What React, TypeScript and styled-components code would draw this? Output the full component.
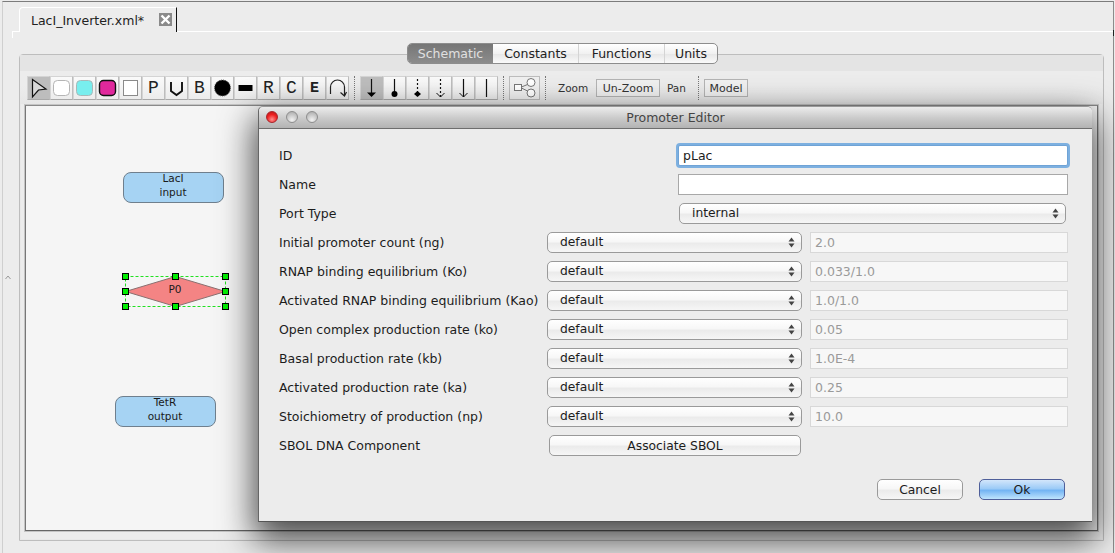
import * as React from 'react';
import styled, { createGlobalStyle, css } from 'styled-components';

const GlobalStyle = createGlobalStyle`
	html, body {
		margin: 0;
		padding: 0;
		background: #ececec;
	}
	* {
		box-sizing: border-box;
	}
`;

const font = `"DejaVu Sans", "Open Sans", sans-serif`;

const Page = styled.div`
	position: relative;
	width: 1115px;
	height: 553px;
	overflow: hidden;
	padding-top: 1px;
	background: #ececec;
	font-family: ${font};
	font-size: 12.5px;
	color: #1c1c1c;
`;

const Shell = styled.div`
	height: 552px;
	margin: 0 1px 0 2px;
	border-top: 1px solid #7c7c7c;
	border-left: 1px solid #cfcfcf;
	border-right: 1px solid #8c8c8c;
`;

const TabBar = styled.div`
	position: relative;
	display: flex;
	align-items: flex-end;
	height: 30px;
	margin-left: 9px;
	padding-left: 7px;
	border-bottom: 1px solid #fff;
	&::before {
		content: '';
		position: absolute;
		left: 0;
		top: 29px;
		width: 1px;
		height: 7px;
		background: #fff;
	}
	&::after {
		content: '';
		position: absolute;
		right: -1px;
		top: 28px;
		width: 1px;
		height: 6px;
		background: #222;
	}
`;

const Tab = styled.div`
	display: flex;
	align-items: center;
	width: 158px;
	height: 25px;
	padding: 0 0 0 11px;
	border-top: 1px solid #fff;
	border-left: 1px solid #fff;
	border-right: 1px solid #111;
	border-top-left-radius: 4px;
	background: #ececec;
	margin-bottom: -1px;
	position: relative;
`;

const TabTitle = styled.span`
	flex: 1;
	font-size: 12.5px;
	color: #222;
`;

const TabClose = styled.svg`
	width: 13px;
	height: 13px;
	margin: -1px 4px 0 0;
`;

const Body = styled.div`
	padding: 22px 9px 0 16px;
`;

const Frame = styled.div`
	position: relative;
	height: 487px;
	border: 1px solid #bdbdbd;
	border-radius: 4px 4px 0 0;
	padding-bottom: 8px;
	display: flex;
	flex-direction: column;
	box-shadow: inset 0 0 0 1px #e8e8e8;
`;

const Strip = styled.div`
	height: 16px;
	flex: none;
	background: #e4e4e4;
`;

const Segments = styled.div`
	position: absolute;
	top: -12px;
	left: 387px;
	display: flex;
	height: 21px;
	border: 1px solid #8d8d8d;
	border-radius: 5px;
	overflow: hidden;
	background: linear-gradient(#fff, #f1f1f1 50%, #e6e6e6 51%, #fafafa);
`;

const Segment = styled.div<{ $active?: boolean; $width: number }>`
	display: flex;
	align-items: center;
	justify-content: center;
	width: ${(p) => p.$width}px;
	font-size: 12.5px;
	color: #222;
	border-right: 1px solid #d4d4d4;
	&:last-child {
		border-right: 0;
	}
	${(p) =>
		p.$active &&
		css`
			color: #e0e0e0;
			border-right: 0;
			background: linear-gradient(#767676, #8c8c8c);
		`}
`;

const Toolbar = styled.div`
	flex: none;
	display: flex;
	align-items: center;
	height: 33px;
	padding: 1px 0 0 7px;
	background: linear-gradient(#ececec, #ececec 45%, #e6e6e6);
`;

const ToolGroup = styled.div`
	display: flex;
`;

const Tool = styled.div<{ $pressed?: boolean; $wide?: boolean }>`
	display: flex;
	align-items: center;
	justify-content: center;
	width: ${(p) => (p.$wide ? 31 : 23)}px;
	height: 24px;
	border: 1px solid #d4d4d4;
	border-bottom-color: #a9a9a9;
	border-right-color: #bdbdbd;
	background: ${(p) => (p.$pressed ? '#bdbdbd' : 'linear-gradient(#fafafa, #ececec)')};
	${(p) =>
		p.$wide &&
		css`
			border-color: #bdbdbd;
			background: #f0f0f0;
		`}
`;

const ToolLetter = styled.span<{ $bold?: boolean }>`
	font-family: "Liberation Mono", monospace;
	font-size: ${(p) => (p.$bold ? 15 : 18)}px;
	font-weight: ${(p) => (p.$bold ? 700 : 400)};
	color: #222;
`;

const Dots = styled.div<{ $left: number; $right: number }>`
	width: 1px;
	height: 24px;
	margin: 0 ${(p) => p.$right}px 0 ${(p) => p.$left}px;
	border-left: 1px dotted #777;
`;

const ToolText = styled.span<{ $width: number; $pad?: number }>`
	width: ${(p) => p.$width}px;
	padding-left: ${(p) => p.$pad ?? 0}px;
	font-size: 10.5px;
	color: #333;
`;

const TextTool = styled.div<{ $width: number }>`
	display: flex;
	align-items: center;
	justify-content: center;
	width: ${(p) => p.$width}px;
	height: 18px;
	border: 1px solid #b4b4b4;
	background: #f0f0f0;
	font-size: 11px;
	color: #333;
`;

const CanvasFrame = styled.div`
	flex: 1;
	margin: 0 4px 0 4px;
	border: 1px solid #c4c4c4;
	padding: 0;
	display: flex;
`;

const Canvas = styled.div`
	position: relative;
	flex: 1;
	border-top: 1px solid #8a8a8a;
	border-left: 1px solid #777;
	border-right: 1px solid #777;
	border-bottom: 1px solid #666;
	background: #f5f5f5;
`;

const SpeciesNode = styled.div<{ $x: number; $y: number }>`
	position: absolute;
	left: ${(p) => p.$x}px;
	top: ${(p) => p.$y}px;
	width: 101px;
	height: 31px;
	border: 1px solid #6f7f8d;
	border-radius: 8px;
	background: #a6d3f3;
	font-size: 10.5px;
	line-height: 14px;
	text-align: center;
	color: #1a1a1a;
`;

const SpeciesLabel = styled.div`
	margin: -2px 1px 0 0;
`;

const Promoter = styled.div`
	position: absolute;
	left: 94px;
	top: 165px;
	width: 110px;
	height: 40px;
`;

const PromoterLabel = styled.span`
	position: absolute;
	left: 0;
	right: 0;
	top: 11px;
	text-align: center;
	font-size: 10.5px;
	line-height: 14px;
	color: #1a1a1a;
`;

const Splitter = styled.svg`
	position: absolute;
	left: 5px;
	top: 275px;
	width: 6px;
	height: 5px;
`;

const Dialog = styled.div`
	position: absolute;
	left: 258px;
	top: 106px;
	width: 834px;
	height: 416px;
	display: flex;
	flex-direction: column;
	border-left: 1px solid #666;
	border-top: 1px solid #999;
	border-bottom: 1px solid #555;
	border-radius: 5px 5px 0 0;
	background: #ececec;
	box-shadow: 0 14px 34px 4px rgba(0, 0, 0, 0.7);
`;

const TitleBar = styled.div`
	position: relative;
	flex: none;
	display: flex;
	align-items: center;
	justify-content: center;
	height: 22px;
	border-bottom: 1px solid #6e6e6e;
	border-radius: 5px 5px 0 0;
	background: linear-gradient(#ececec, #c9c9c9 55%, #b3b3b3);
	font-size: 12.5px;
	color: #444;
`;

const Lights = styled.div`
	position: absolute;
	left: 7px;
	top: 4px;
	display: flex;
	gap: 8px;
`;

const Light = styled.span<{ $red?: boolean }>`
	width: 12px;
	height: 12px;
	border-radius: 50%;
	border: 1px solid ${(p) => (p.$red ? '#a8242a' : '#8e8e8e')};
	background: ${(p) =>
		p.$red
			? 'radial-gradient(circle at 50% 75%, #ff8f8f, #ee2020 55%, #b01818)'
			: 'radial-gradient(circle at 50% 80%, #f2f2f2, #c4c4c4 60%, #a8a8a8)'};
`;

const Form = styled.div`
	display: flex;
	flex-direction: column;
	padding: 12px 0 0 20px;
`;

const Row = styled.div`
	display: flex;
	align-items: center;
	height: 29px;
`;

const Label = styled.div<{ $width?: number }>`
	flex: none;
	width: ${(p) => p.$width ?? 268}px;
	font-size: 12.5px;
	color: #1c1c1c;
`;

const TextField = styled.div<{ $focused?: boolean }>`
	display: flex;
	align-items: center;
	width: 390px;
	height: 21px;
	padding-left: 4px;
	border: 1px solid #a8a8a8;
	background: #fff;
	font-size: 12.5px;
	color: #1c1c1c;
	${(p) =>
		p.$focused &&
		css`
			border: 1px solid #6fa3d6;
			border-radius: 2px;
			box-shadow: 0 0 0 2px #7db0e0;
		`}
`;

const ValueField = styled.div`
	display: flex;
	align-items: center;
	flex: none;
	width: 258px;
	height: 21px;
	margin-left: 8px;
	padding-left: 4px;
	border: 1px solid #d8d8d8;
	background: #f7f7f7;
	font-size: 12.5px;
	color: #9a9a9a;
`;

const aqua = css`
	border: 1px solid #9a9a9a;
	border-radius: 5px;
	background: linear-gradient(#fff, #f7f7f7 45%, #ebebeb 55%, #f6f6f6);
	font-size: 12.3px;
	color: #1c1c1c;
`;

const Select = styled.div<{ $wide?: boolean }>`
	${aqua};
	flex: none;
	display: flex;
	align-items: center;
	justify-content: space-between;
	width: ${(p) => (p.$wide ? 387 : 255)}px;
	height: 21px;
	margin-left: ${(p) => (p.$wide ? 1 : 0)}px;
	padding: 0 6px 1px 12px;
`;

const SelectArrows = styled.svg`
	width: 7px;
	height: 11px;
`;

const AssociateButton = styled.div`
	${aqua};
	display: flex;
	align-items: center;
	justify-content: center;
	width: 252px;
	height: 21px;
	margin-left: 2px;
`;

const Footer = styled.div`
	display: flex;
	justify-content: flex-end;
	gap: 16px;
	margin-top: 19px;
	padding-right: 27px;
`;

const DialogButton = styled.div<{ $primary?: boolean }>`
	${aqua};
	display: flex;
	align-items: center;
	justify-content: center;
	width: 86px;
	height: 21px;
	${(p) =>
		p.$primary &&
		css`
			border-color: #4f5f9a;
			background: linear-gradient(#d3e6fb, #9ccbf7 45%, #74b4f3 55%, #bfe4fd);
		`}
`;

const parameters = [
	['Initial promoter count (ng)', '2.0'],
	['RNAP binding equilibrium (Ko)', '0.033/1.0'],
	['Activated RNAP binding equilibrium (Kao)', '1.0/1.0'],
	['Open complex production rate (ko)', '0.05'],
	['Basal production rate (kb)', '1.0E-4'],
	['Activated production rate (ka)', '0.25'],
	['Stoichiometry of production (np)', '10.0'],
];

const Arrows = () => (
	<SelectArrows viewBox="0 0 7 11">
		<path d="M3.5 0.5 L6.5 4.5 H0.5 Z M3.5 10.5 L0.5 6.5 H6.5 Z" fill="#444" />
	</SelectArrows>
);

const Glyph: React.FC<{ children: React.ReactNode }> = ({ children }) => (
	<svg width="21" height="22" viewBox="0 0 21 22" fill="none">
		{children}
	</svg>
);

// reaction edges, all share one vertical stem with a different head
const Stem: React.FC<{ dashed?: boolean; end?: number }> = ({ dashed, end = 18 }) => (
	<path d={`M10.5 2 V${end}`} stroke="#111" strokeWidth="1.2" strokeDasharray={dashed ? '2 2' : undefined} />
);

const App: React.FC = () => {
	return (
		<Page>
			<GlobalStyle />
			<Shell>
				<TabBar>
					<Tab>
						<TabTitle>LacI_Inverter.xml*</TabTitle>
						<TabClose viewBox="0 0 13 13">
							<rect width="13" height="13" fill="#8a8a8a" />
							<path d="M2.5 2.5 L10.5 10.5 M10.5 2.5 L2.5 10.5" stroke="#fff" strokeWidth="2.4" />
						</TabClose>
					</Tab>
				</TabBar>
				<Body>
					<Frame>
						<Segments>
							<Segment $active $width={85}>Schematic</Segment>
							<Segment $width={86}>Constants</Segment>
							<Segment $width={86}>Functions</Segment>
							<Segment $width={52}>Units</Segment>
						</Segments>
						<Strip />
						<Toolbar>
							<ToolGroup>
								<Tool $pressed>
									<Glyph>
										<path d="M4.5 2.5 L18 12 L10.5 13 L4.5 20 Z" fill="#d8d8d8" stroke="#111" strokeWidth="1.2" />
									</Glyph>
								</Tool>
								<Tool>
									<Glyph>
										<rect x="2.5" y="3.5" width="16" height="15" rx="4" fill="#fff" stroke="#b5b5b5" />
									</Glyph>
								</Tool>
								<Tool>
									<Glyph>
										<rect x="2.5" y="3.5" width="16" height="15" rx="4" fill="#78eeee" stroke="#a8b8b8" />
									</Glyph>
								</Tool>
								<Tool>
									<Glyph>
										<rect x="2.5" y="3.5" width="16" height="15" rx="4" fill="#e0289c" stroke="#111" strokeWidth="1.4" />
									</Glyph>
								</Tool>
								<Tool>
									<Glyph>
										<rect x="3.5" y="3.5" width="14" height="15" fill="#fff" stroke="#8a8a8a" />
									</Glyph>
								</Tool>
								<Tool>
									<ToolLetter>P</ToolLetter>
								</Tool>
								<Tool>
									<Glyph>
										<path d="M5 5 V14 L10.5 18 L16 14 V5" stroke="#111" strokeWidth="1.9" />
									</Glyph>
								</Tool>
								<Tool>
									<ToolLetter>B</ToolLetter>
								</Tool>
								<Tool>
									<Glyph>
										<circle cx="10.5" cy="11" r="8" fill="#000" stroke="#555" strokeDasharray="1 1" />
									</Glyph>
								</Tool>
								<Tool>
									<Glyph>
										<rect x="3.5" y="8" width="14" height="6" fill="#000" />
									</Glyph>
								</Tool>
								<Tool>
									<ToolLetter>R</ToolLetter>
								</Tool>
								<Tool>
									<ToolLetter>C</ToolLetter>
								</Tool>
								<Tool>
									<ToolLetter $bold>E</ToolLetter>
								</Tool>
								<Tool>
									<Glyph>
										<path d="M3.5 17 V10 A7 7 0 0 1 17.5 10 V18" stroke="#222" strokeWidth="1.2" />
										<path d="M13.5 15.5 L17.5 19 L19.5 15" stroke="#222" strokeWidth="1.2" />
									</Glyph>
								</Tool>
							</ToolGroup>
							<Dots $left={5} $right={5} />
							<ToolGroup>
								<Tool $pressed>
									<Glyph>
										<Stem end={16} />
										<path d="M6 15.5 H15 L10.5 20 Z" fill="#000" />
									</Glyph>
								</Tool>
								<Tool>
									<Glyph>
										<Stem end={16} />
										<circle cx="10.5" cy="17" r="3" fill="#000" />
									</Glyph>
								</Tool>
								<Tool>
									<Glyph>
										<Stem dashed end={15} />
										<path d="M10.5 14 L14 17 L10.5 20 L7 17 Z" fill="#000" />
									</Glyph>
								</Tool>
								<Tool>
									<Glyph>
										<Stem dashed end={20} />
										<path d="M6.5 16 L10.5 20 L14.5 16" stroke="#111" />
									</Glyph>
								</Tool>
								<Tool>
									<Glyph>
										<Stem end={20} />
										<path d="M6.5 16 L10.5 20 L14.5 16" stroke="#111" />
									</Glyph>
								</Tool>
								<Tool>
									<Glyph>
										<Stem end={20} />
									</Glyph>
								</Tool>
							</ToolGroup>
							<Dots $left={5} $right={5} />
							<Tool $wide>
								<svg width="26" height="20" viewBox="0 0 26 20" fill="none" stroke="#777">
									<rect x="2.5" y="6.5" width="7" height="6" fill="#fff" />
									<circle cx="19" cy="4.5" r="4" fill="#fff" />
									<circle cx="19" cy="15" r="4" fill="#fff" />
									<path d="M9.5 9 L15.5 6.5 M9.5 10 L15.5 13" />
								</svg>
							</Tool>
							<Dots $left={5} $right={12} />
							<ToolText $width={38}>Zoom</ToolText>
							<TextTool $width={64}>Un-Zoom</TextTool>
							<ToolText $width={38} $pad={7}>Pan</ToolText>
							<Dots $left={0} $right={5} />
							<TextTool $width={44}>Model</TextTool>
						</Toolbar>
						<CanvasFrame>
							<Canvas>
								<SpeciesNode $x={97} $y={66}>
									<SpeciesLabel>LacI<br />input</SpeciesLabel>
								</SpeciesNode>
								<SpeciesNode $x={89} $y={290}>
									<SpeciesLabel>TetR<br />output</SpeciesLabel>
								</SpeciesNode>
								<Promoter>
									<svg width="110" height="40" viewBox="0 0 110 40" fill="none">
										<rect x="5.5" y="5.5" width="100" height="30" stroke="#22e022" strokeDasharray="3 2" />
										<path d="M5.5 20.5 L55.5 5.5 L105.5 20.5 L55.5 35.5 Z" fill="#f48484" stroke="#8a7070" />
										{[5.5, 55.5, 105.5].map((x) =>
											[5.5, 20.5, 35.5].map((y) =>
												x === 55.5 && y === 20.5 ? null : (
													<rect key={`${x}-${y}`} x={x - 3} y={y - 3} width="6" height="6" fill="#00ee00" stroke="#000" />
												),
											),
										)}
									</svg>
									<PromoterLabel>P0</PromoterLabel>
								</Promoter>
							</Canvas>
						</CanvasFrame>
					</Frame>
				</Body>
			</Shell>
			<Splitter viewBox="0 0 6 5">
				<path d="M0.5 4 L3 1 L5.5 4" stroke="#999" fill="none" />
			</Splitter>
			<Dialog>
				<TitleBar>
					<Lights>
						<Light $red />
						<Light />
						<Light />
					</Lights>
					Promoter Editor
				</TitleBar>
				<Form>
					<Row>
						<Label $width={399}>ID</Label>
						<TextField $focused>pLac</TextField>
					</Row>
					<Row>
						<Label $width={399}>Name</Label>
						<TextField />
					</Row>
					<Row>
						<Label $width={399}>Port Type</Label>
						<Select $wide>
							internal
							<Arrows />
						</Select>
					</Row>
					{parameters.map(([label, value]) => (
						<Row key={label}>
							<Label>{label}</Label>
							<Select>
								default
								<Arrows />
							</Select>
							<ValueField>{value}</ValueField>
						</Row>
					))}
					<Row>
						<Label>SBOL DNA Component</Label>
						<AssociateButton>Associate SBOL</AssociateButton>
					</Row>
				</Form>
				<Footer>
					<DialogButton>Cancel</DialogButton>
					<DialogButton $primary>Ok</DialogButton>
				</Footer>
			</Dialog>
		</Page>
	);
};

export default App;
